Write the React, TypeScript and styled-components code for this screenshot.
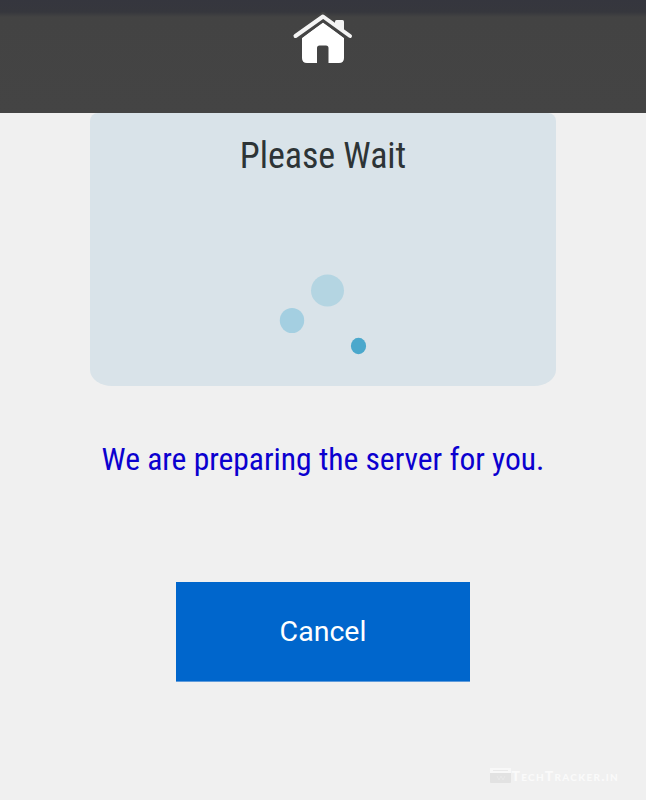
import React from "react";
import styled, { createGlobalStyle } from "styled-components";

const GlobalStyle = createGlobalStyle`
  * { box-sizing: border-box; }
  body { margin: 0; background: #f0f0f0; font-family: Roboto, "Liberation Sans", sans-serif; }
`;

const Page = styled.div`
  display: flex;
  flex-direction: column;
  align-items: center;
  height: 800px;
  overflow: hidden;
  background: #f0f0f0;
`;

const TopBar = styled.header`
  display: flex;
  justify-content: center;
  flex: none;
  width: 100%;
  height: 113px;
  padding-top: 12px;
  background: linear-gradient(#35363e 0, #36373d 12px, #434343 17px, #444 100%);
`;

const Panel = styled.section`
  display: flex;
  flex-direction: column;
  align-items: center;
  flex: none;
  width: 466px;
  height: 273px;
  padding-top: 22px;
  border-radius: 8px 8px 22px 22px / 8px 8px 16px 16px;
  background: #d9e3e9;
`;

const CondensedText = styled.p<{ $size: number; $color: string; $spacing?: number }>`
  margin: 0;
  color: ${(p) => p.$color};
  font-size: ${(p) => p.$size}px;
  font-weight: 430;
  font-stretch: 75%;
  line-height: 42px;
  letter-spacing: ${(p) => p.$spacing ?? 0}px;
  white-space: nowrap;
`;

const Spinner = styled.svg`
  display: block;
  margin-top: 97px;
`;

const Message = styled.div`
  flex: none;
  margin-top: 53px;
`;

const CancelButton = styled.button`
  flex: none;
  width: 294px;
  height: 100px;
  margin-top: 101px;
  padding: 0;
  border: 0;
  border-bottom: 1px solid #5f9bdb;
  background: #0066cc;
  color: #fff;
  font: 400 28.500px/99px Roboto, sans-serif;
`;

const Watermark = styled.footer`
  display: flex;
  align-items: center;
  align-self: flex-end;
  gap: 1px;
  margin: 85px 27px 0 0;
  height: 17px;
  color: #fafafa;
  font: 900 14px/17px Lato, sans-serif;
  font-variant: small-caps;
  letter-spacing: 1.25px;
`;

export default function App() {
  return (
    <Page>
      <GlobalStyle />
      <TopBar>
        <svg width="62" height="54" viewBox="0 0 62 54" aria-label="Home">
          <path d="M31 10 10 26V46Q10 51 15 51H25V36Q25 33.500 27.500 33.500H34Q36.500 33.500 36.500 36V51H47Q52 51 52 46V26Z" fill="#fff" />
          <path d="M3 25 31 5 59 25" fill="none" stroke="#444" strokeWidth="9" />
          <path d="M43 13V9.500Q43 8 44.500 8H50.500Q52 8 52 9.500V21Z" fill="#f2f2f2" />
          <path d="M3.500 24 31 4.500 58 24" fill="none" stroke="#f4f4f4" strokeWidth="4" strokeLinecap="round" strokeLinejoin="round" />
        </svg>
      </TopBar>
      <Panel>
        <CondensedText as="h1" $size={36} $color="#2d3436" $spacing={-0.05}>
          Please Wait
        </CondensedText>
        <Spinner width="100" height="90" viewBox="0 0 100 90">
          <ellipse cx="54.500" cy="16.500" rx="16.500" ry="16" fill="#b4d5e2" />
          <ellipse cx="19" cy="46.500" rx="12.200" ry="12.600" fill="#a4cfe1" />
          <ellipse cx="85.500" cy="72" rx="7.600" ry="8.200" fill="#4ba8cc" />
        </Spinner>
      </Panel>
      <Message>
        <CondensedText $size={31.6} $color="#0b00cf" $spacing={-0.02}>
          We are preparing the server for you.
        </CondensedText>
      </Message>
      <CancelButton type="button">Cancel</CancelButton>
      <Watermark>
        <svg width="21" height="15" viewBox="0 0 21 15">
          <rect width="21" height="15" rx="1" fill="#e2e2e2" />
          <path d="M0 0H21V5H0Z" fill="#f8f8f8" />
          <path d="M3 2.500H18M7 8 9 12 11 8 13 12 15 8" fill="none" stroke="#e9e9e9" />
        </svg>
        TechTracker.in
      </Watermark>
    </Page>
  );
}
